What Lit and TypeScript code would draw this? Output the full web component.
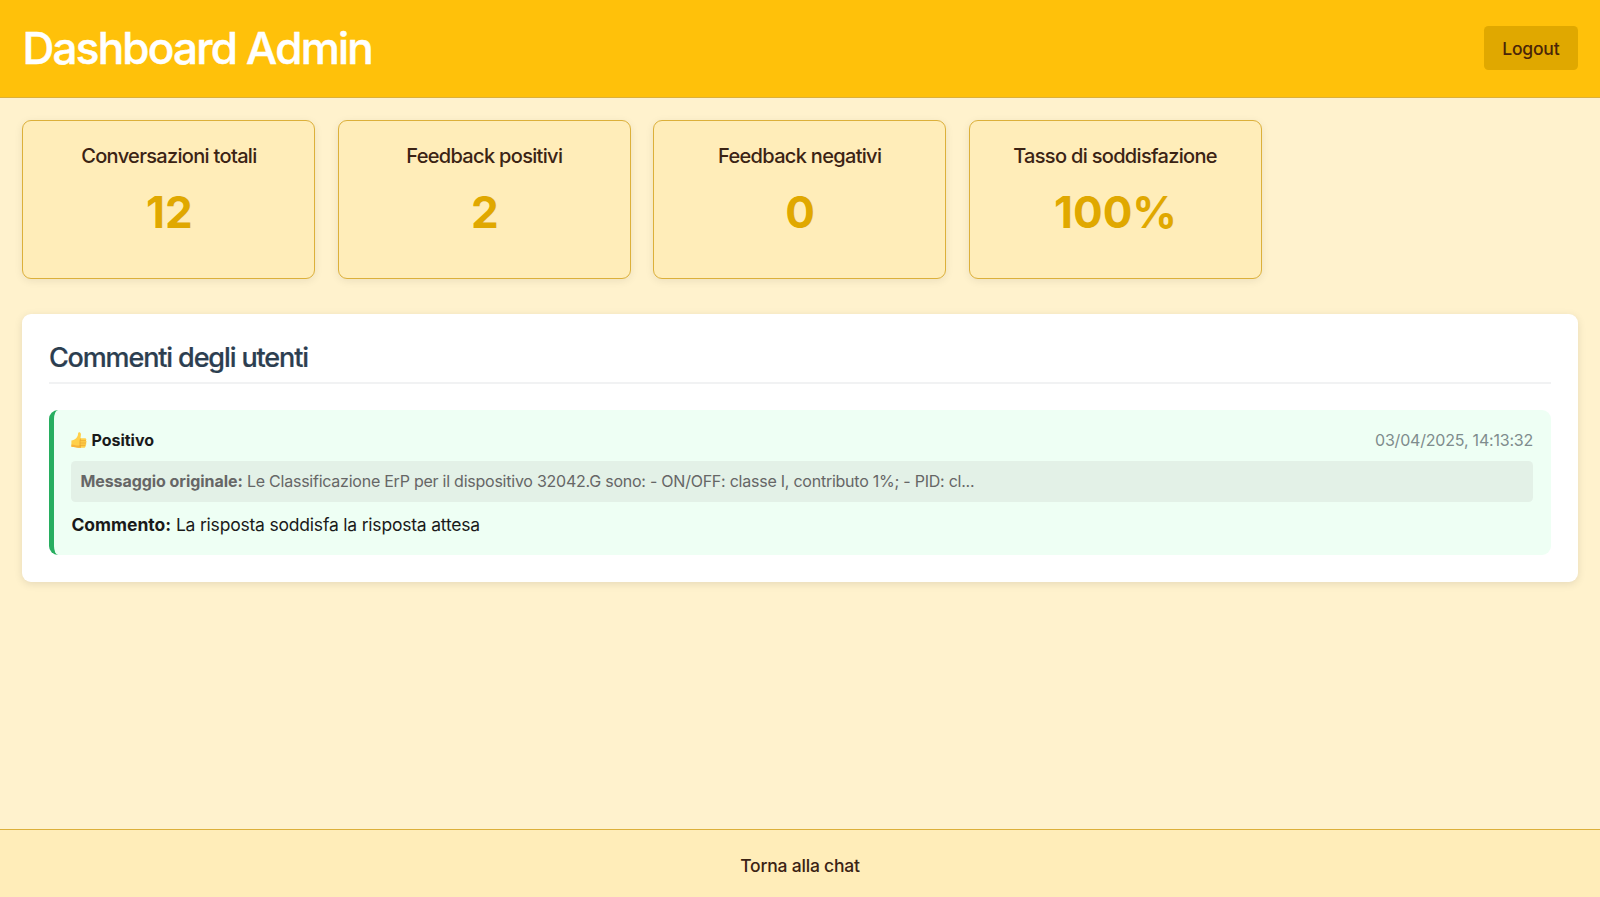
import { LitElement, html, css } from "lit";
import { customElement, property } from "lit/decorators.js";

@customElement("stat-card")
export class StatCard extends LitElement {
  @property() label = "";
  @property() value = "";

  static styles = css`
    :host {
      display: block;
      box-sizing: border-box;
      width: 293px;
      height: 158.4px;
      padding: 21.8px 22px;
      border: 1px solid #dcb03a;
      border-radius: 9px;
      background: #ffedb9;
      box-shadow: 0 2px 9px rgba(0, 0, 0, 0.08);
      text-align: center;
    }
    .label {
      margin: 0;
      font-size: 20px;
      font-weight: 500;
      line-height: 26px;
      letter-spacing: -0.68px;
      color: #3b2314;
    }
    .value {
      margin: 16px 0 0;
      padding-left: 1px;
      font-size: 44px;
      font-weight: 700;
      line-height: 54px;
      color: #e0a800;
    }
  `;

  render() {
    return html`
      <h3 class="label">${this.label}</h3>
      <p class="value">${this.value}</p>
    `;
  }
}

@customElement("app-root")
export class AppRoot extends LitElement {
  static styles = css`
    :host {
      display: flex;
      flex-direction: column;
      height: 100vh;
      overflow: hidden;
      background: #fff2cd;
      color: #1a1a1a;
      font-family: Inter, "Liberation Sans", sans-serif;
    }
    header {
      display: flex;
      align-items: center;
      justify-content: space-between;
      box-sizing: border-box;
      height: 98px;
      padding: 0 22.5px 1px;
      border-bottom: 1px solid #dcb03a;
      background: #ffc10a;
    }
    h1 {
      margin: 0;
      font-size: 44px;
      font-weight: 500;
      line-height: 54px;
      letter-spacing: -1.76px;
      -webkit-text-stroke: 0.5px #fff;
      color: #fff;
    }
    .logout {
      height: 44px;
      padding: 0 18px;
      border: 0;
      border-radius: 4.5px;
      background: #e0a800;
      color: #4a2508;
      font: 500 17.5px Inter, "Liberation Sans", sans-serif;
      letter-spacing: -0.18px;
    }
    main {
      flex: 1;
      padding: 22.4px;
    }
    .stats {
      display: flex;
      gap: 22.4px;
    }
    .panel {
      margin-top: 35.6px;
      padding: 27.3px 26.5px 27px;
      border-radius: 9px;
      background: #fff;
      box-shadow: 0 2px 9px rgba(0, 0, 0, 0.1);
    }
    h2 {
      margin: 0 0 26.5px;
      padding-bottom: 8.3px;
      border-bottom: 2px solid #f1f2f3;
      font-size: 27px;
      font-weight: 500;
      line-height: 32px;
      letter-spacing: -1.13px;
      -webkit-text-stroke: 0.2px #2c3e50;
      color: #2c3e50;
    }
    .comment {
      box-sizing: border-box;
      height: 145px;
      padding: 18.3px 18px 0 17.5px;
      border-left: 5px solid #27ae60;
      border-radius: 9px;
      background: #eefff4;
    }
    .head {
      display: flex;
      align-items: center;
      justify-content: space-between;
      font-size: 16px;
      line-height: 23px;
    }
    .kind {
      display: flex;
      align-items: center;
      gap: 4px;
      font-weight: 700;
    }
    .date {
      color: #7f8c8d;
      letter-spacing: -0.2px;
    }
    .thumb {
      width: 16px;
      height: 16px;
    }
    .original {
      margin-top: 9px;
      padding: 9px;
      border-radius: 4.5px;
      background: #e3f1e7;
      color: #666;
      font-size: 16px;
      line-height: 23.5px;
      letter-spacing: -0.24px;
    }
    .original strong {
      letter-spacing: -0.06px;
    }
    .text {
      margin-top: 9.5px;
      font-size: 17.5px;
      line-height: 26px;
      letter-spacing: -0.2px;
    }
    .text strong {
      letter-spacing: 0;
    }
    footer {
      display: flex;
      align-items: center;
      justify-content: center;
      box-sizing: border-box;
      height: 68px;
      padding-top: 4px;
      border-top: 1px solid #dcb03a;
      background: #ffedb9;
    }
    .back {
      color: #3b2314;
      font-size: 17.5px;
      font-weight: 500;
      letter-spacing: -0.2px;
      text-decoration: none;
    }
  `;

  private stats = [
    { label: "Conversazioni totali", value: "12" },
    { label: "Feedback positivi", value: "2" },
    { label: "Feedback negativi", value: "0" },
    { label: "Tasso di soddisfazione", value: "100%" },
  ];

  render() {
    return html`
      <header>
        <h1>Dashboard Admin</h1>
        <button class="logout">Logout</button>
      </header>
      <main>
        <section class="stats">
          ${this.stats.map((s) => html`<stat-card .label=${s.label} .value=${s.value}></stat-card>`)}
        </section>
        <section class="panel">
          <h2>Commenti degli utenti</h2>
          <article class="comment">
            <div class="head">
              <span class="kind">
                <svg class="thumb" viewBox="0 0 16 16" aria-hidden="true">
                  <path d="M.4 8.6C2 8 4 7.4 5.4 5.9 6.7 4.4 7 2.9 7.1 1.2 7.3-.3 9.7-.1 9.9 2c.1 1.5-.2 2.9-.4 4.2h4.4c1.6 0 1.9 1.9.9 2.4 1.1.6.9 2 .1 2.3.7.8.4 2-.4 2.3.4 1.3-.4 2.5-1.6 2.5H7.2c-2.2 0-3.2-.6-6.8-.9z" fill="#ffd04a"/>
                  <path d="M.4 12.4c3.4.2 4.6 1.1 7.1 1.1 1 0 1.4-.3 2-.7l-.2 2.9H7.2c-2.2 0-3.2-.6-6.8-.9z" fill="#f8b43a"/>
                  <path d="M9.5 8.7h5.1M9.4 11h5.3M9.4 13.3h4.8M9.4 7c-.6 1.7-.6 6 0 8.4" fill="none" stroke="#e89f2a" stroke-width=".7" stroke-linecap="round"/>
                </svg>
                Positivo
              </span>
              <span class="date">03/04/2025, 14:13:32</span>
            </div>
            <div class="original">
              <strong>Messaggio originale:</strong> Le Classificazione ErP per il dispositivo 32042.G sono: - ON/OFF: classe I, contributo 1%; - PID: cl...
            </div>
            <div class="text"><strong>Commento:</strong> La risposta soddisfa la risposta attesa</div>
          </article>
        </section>
      </main>
      <footer><a class="back">Torna alla chat</a></footer>
    `;
  }
}
